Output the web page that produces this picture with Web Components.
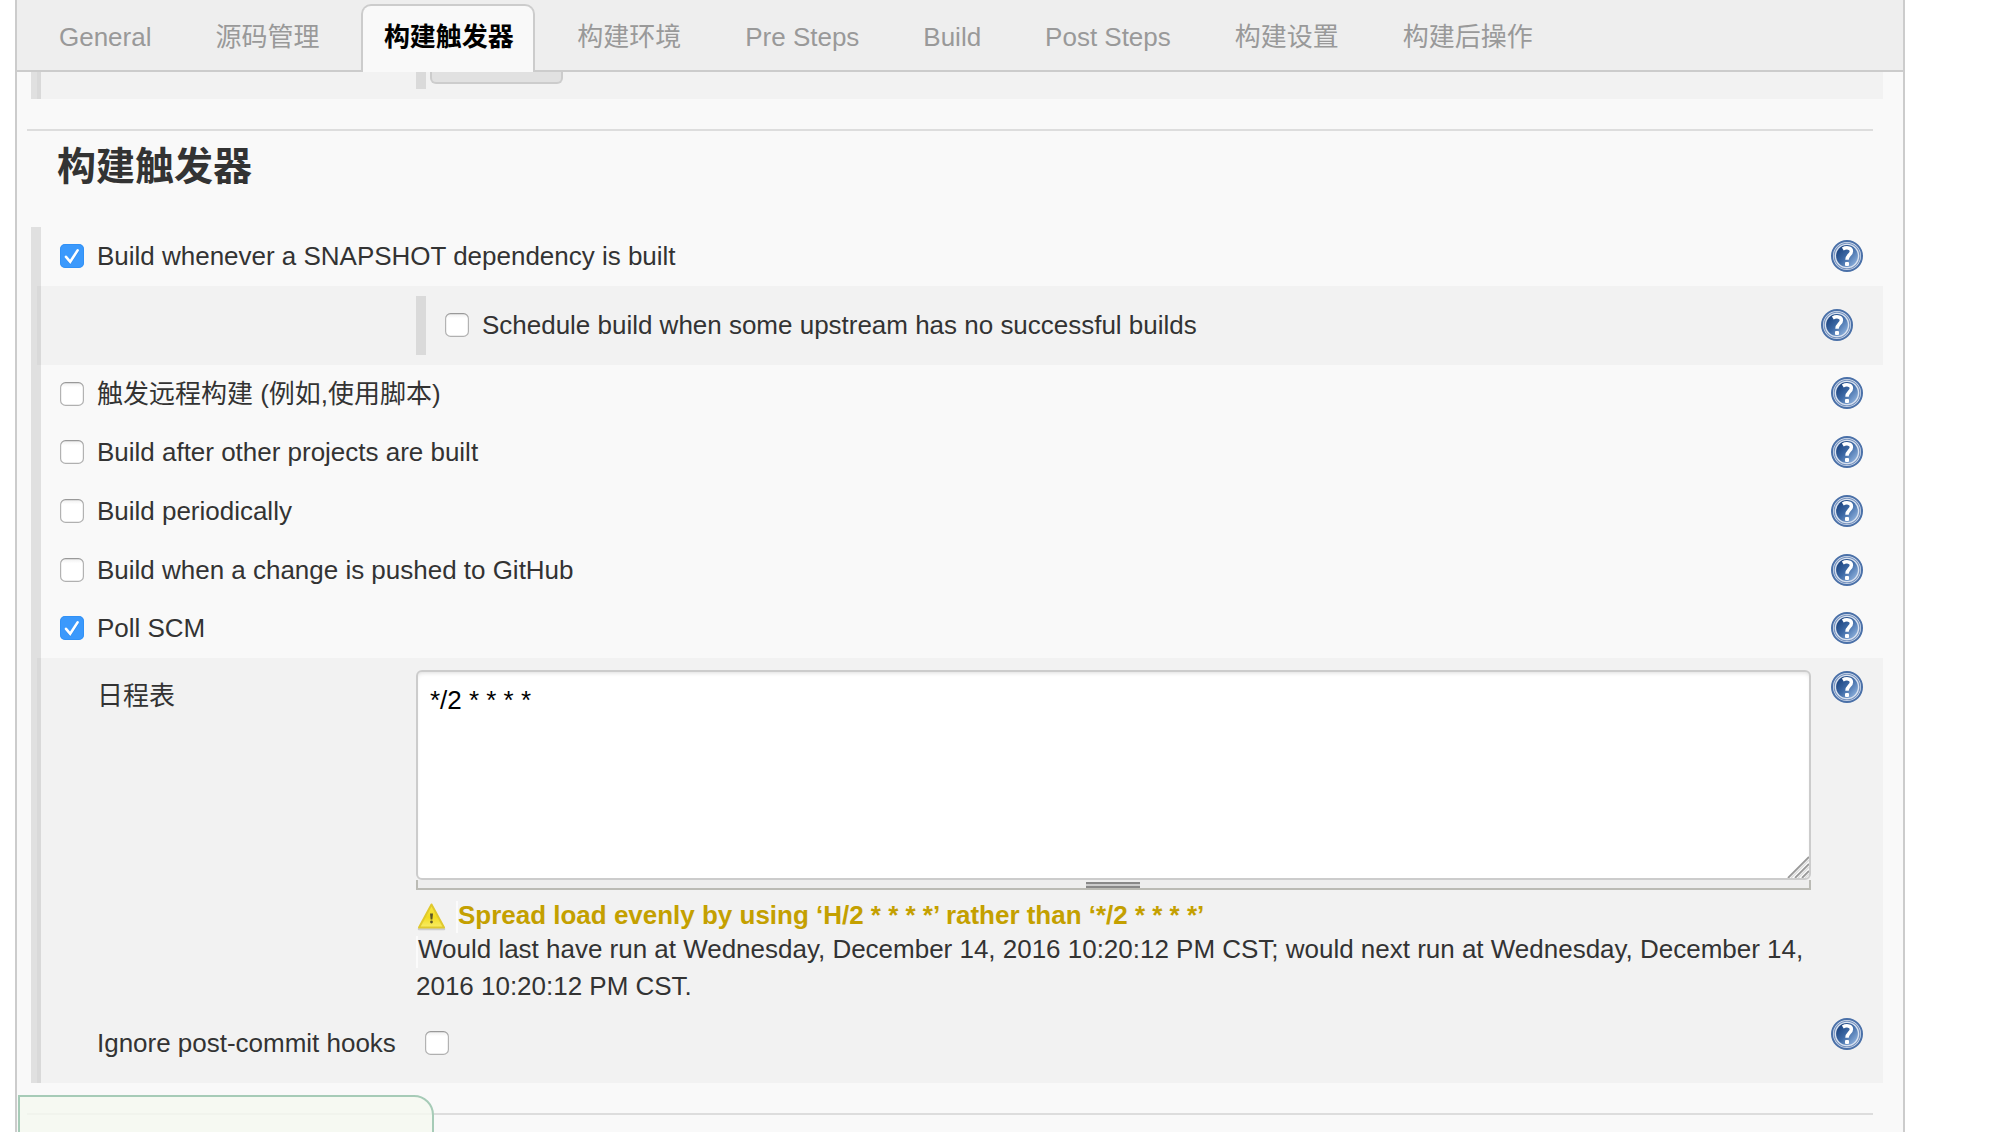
<!DOCTYPE html>
<html lang="zh-CN">
<head>
<meta charset="utf-8">
<title>构建触发器</title>
<style>
html,body{margin:0;height:100%;overflow:hidden;background:#fff}
body{font:26px/36px "Liberation Sans","Noto Sans CJK SC",sans-serif;color:#333;letter-spacing:-.012px}
</style>
</head>
<body>
<config-page></config-page>
<script>
const define = (name, html) => {
  const t = document.createElement('template');
  t.innerHTML = html;
  customElements.define(name, class extends HTMLElement {
    constructor() {
      super();
      this.attachShadow({mode: 'open'}).append(t.content.cloneNode(true));
    }
  });
};

define('config-tab', `<style>
:host{display:flex;align-items:center;height:50px;padding:0 32px;color:#999;white-space:nowrap}
:host([active]){box-sizing:border-box;height:68px;margin:0 10.5px -2px 9.5px;padding:0 19px 4px 21px;border:2px solid #ccc;border-bottom:0;border-radius:10px 10px 0 0;background:#f9f9f9;color:#000;font-weight:bold}
</style><slot></slot>`);

define('tab-bar', `<style>
:host{display:flex;align-items:flex-start;box-sizing:border-box;height:72px;flex:none;padding:4px 0 0 10px;background:#eee;border-bottom:2px solid #ccc}
::slotted(*){margin-top:8px}
::slotted([active]){margin-top:0}
</style><slot></slot>`);

define('check-box', `<style>
:host{display:block;flex:none;width:24px;height:24px}
svg{display:block}
.on{display:none}
:host([checked]) .on{display:block}
:host([checked]) .off{display:none}
</style>
<svg class="off" width="24" height="24" viewBox="0 0 24 24"><defs><linearGradient id="s" x2="0" y2="1"><stop stop-color="#999"/><stop offset=".2" stop-color="#b4b4b4"/><stop offset="1" stop-color="#b0b0b0"/></linearGradient><linearGradient id="f" x2="0" y2="1"><stop stop-color="#eee"/><stop offset=".2" stop-color="#fff"/></linearGradient></defs><rect x=".6" y=".6" width="22.8" height="22.8" rx="5" fill="url(#f)" stroke="url(#s)" stroke-width="1.2"/></svg>
<svg class="on" width="24" height="24" viewBox="0 0 24 24"><rect width="24" height="24" rx="5" fill="#3b99fc"/><rect x=".5" y=".5" width="23" height="23" rx="4.5" fill="none" stroke="#2c8cf2" stroke-opacity=".6"/><path d="M6 13.5L10.2 18.5L18 7" fill="none" stroke="#1c74d0" stroke-opacity=".4" stroke-width="2.6"/><path d="M6 12.8L10.2 17.8L17.6 6.4" fill="none" stroke="#fff" stroke-width="2.6" stroke-linecap="round"/></svg>`);

define('help-icon', `<style>:host{display:block;flex:none;width:32px;height:32px}svg{display:block}</style>
<svg width="32" height="32" viewBox="0 0 32 32"><defs><linearGradient id="g" x1=".1" y1=".2" x2=".9" y2=".9"><stop stop-color="#1e4682"/><stop offset=".45" stop-color="#3e6aa6"/><stop offset="1" stop-color="#8db0dc"/></linearGradient></defs>
<circle cx="16" cy="16" r="15" fill="#dae3f0" stroke="#4a70a8" stroke-width="2"/><circle cx="16" cy="16" r="12.8" fill="none" stroke="#7793bf" stroke-width="1.1"/><circle cx="16" cy="16" r="10.9" fill="url(#g)"/>
<path d="M11.8 9C14.8 7.2 20.4 7.2 20.4 11.2C20.4 14.8 16 14.8 16 19.8" fill="none" stroke="#fff" stroke-width="3.5"/><rect x="14" y="22" width="4" height="4" rx="1" fill="#fff"/></svg>`);

define('option-row', `<style>
:host{display:flex;align-items:center;box-sizing:border-box;height:58px;padding:0 20px 0 19px;margin-left:10px}
.label{flex:1;padding-left:13px;white-space:nowrap}
:host([raised]) help-icon{margin-top:-2px}
</style><slot name="box"></slot><span class="label"><slot></slot></span><help-icon></help-icon>`);

define('nested-block', `<style>
:host{display:block;box-sizing:border-box;margin-left:6px;padding-left:4px;background:rgba(0,0,0,.026)}
</style><slot></slot>`);

define('section-head', `<style>
:host{display:block;margin:0 30px 0 10px;border-top:2px solid #ddd;flex:none}
h2{margin:0;padding:7px 0 0 30px;font-size:39px;line-height:58px;height:57px;font-weight:bold}
</style><h2><slot></slot></h2>`);

define('cron-field', `<style>
:host{display:block;width:1395px}
.area{box-sizing:border-box;height:210px;border:2px solid #ccc;border-radius:6px;background:#fff;box-shadow:inset 0 3px 4px -2px #ddd;padding:10px 12px 11px;color:#000;display:flex;justify-content:space-between}
.corner{align-self:flex-end;margin:0 -12px -11px 0}
.drag{box-sizing:border-box;height:10px;border:2px solid #bbbbb5;border-top:0;background:#eee;display:flex;justify-content:center}
.grip{width:54px;height:6px;margin:2px 1px 0 0;background:linear-gradient(#888 0 2px,#ccc 2px 4px,#888 4px)}
</style><div class="area"><slot></slot><svg class="corner" width="22" height="22" viewBox="0 0 22 22"><g stroke="#999" stroke-width="1.8"><path d="M1 22L22 1M8 22L22 8M15 22L22 15"/></g><g stroke="#ddd" stroke-width="1.5"><path d="M4 22L22 4M11 22L22 11M18 22L22 18"/></g></svg></div><div class="drag"><div class="grip"></div></div>`);

define('cron-message', `<style>
:host{display:block}
.warn{display:flex;height:35px;align-items:flex-start;padding-top:10px;color:#c4a000;font-weight:bold}
.warn svg{margin:1px 10px 0 0;flex:none}
.txt{line-height:28px;height:32px;border-left:2px solid #fbfbfb;white-space:nowrap;margin-top:1px;margin-left:-1px}
.run{margin-top:1px;white-space:nowrap}
.first{display:block;border-left:2px solid #fbfbfb;height:32px;line-height:26px}
.next{display:block;height:36px;line-height:36px}
</style><div class="warn"><svg width="31" height="30" viewBox="0 0 31 30"><defs><linearGradient id="y" x2="0" y2="1"><stop stop-color="#f7e94c"/><stop offset=".55" stop-color="#f2dc20"/><stop offset="1" stop-color="#f8ed68"/></linearGradient></defs><path d="M3 28L28 28" stroke="#aaa" stroke-opacity=".5" stroke-width="2.5" stroke-linecap="round"/><path d="M15.5 3.5L28 26.5H3Z" fill="url(#y)" stroke="#e0c92e" stroke-width="2" stroke-linejoin="round"/><path d="M14 12.5H17L16.4 18.5H14.6Z" fill="#5c572c"/><circle cx="15.5" cy="21" r="1.4" fill="#5c572c"/></svg><span class="txt"><slot name="warning"></slot></span></div>
<div class="run"><span class="first"><slot name="first"></slot></span><span class="next"><slot name="next"></slot></span></div>`);

define('config-page', `<style>
:host{display:flex;flex-direction:column;box-sizing:border-box;width:1890px;height:1132px;margin-left:15px;border:solid #ccc;border-width:0 2px;background:#f9f9f9;overflow:hidden}
.group{margin:0 20px 0 14px;background:linear-gradient(#e0e0e0,#e0e0e0) 0 0/10px 100% no-repeat;flex:none}
.prev{height:27px;margin-bottom:30px}
.prev nested-block{height:27px;padding-left:379px;display:flex;align-items:flex-start}
.stripe{width:10px;height:17px;background:#dadada}
.button{box-sizing:border-box;width:133px;height:12px;margin-left:4px;border:2px solid #ccc;border-top:0;border-radius:0 0 6px 6px;background:#e1e1e1}
.triggers{margin-top:32px}
.h59{height:59px;padding-bottom:1px}.h60{height:60px}
.upstream{height:79px;padding:10px 30px 10px 379px;display:flex}
.upstream option-row{flex:1;height:59px;margin:0;padding:0 0 1px 29px;background:linear-gradient(#dadada,#dadada) 0 0/10px 100% no-repeat}
.poll{height:425px;padding:12px 20px 0 60px}
.line{display:flex;align-items:flex-start}
.name{flex:none;width:319px;white-space:nowrap}
.main{flex:none;width:1395px;height:336px}
.line help-icon{margin-left:20px;margin-top:1px}
.ignore .name{width:328px;padding-top:19px}
.ignore check-box{margin-top:25px}
.ignore help-icon{margin-left:auto;margin-top:12px}
.schedule .name{padding-top:8px}
section-head.last{margin-top:30px}
.toast{position:absolute;left:18px;top:1095px;box-sizing:border-box;width:416px;height:60px;border:2px solid #a6cbb7;border-top-right-radius:20px;background:rgba(245,249,240,.82)}
</style>
<tab-bar><config-tab>General</config-tab><config-tab>源码管理</config-tab><config-tab active>构建触发器</config-tab><config-tab>构建环境</config-tab><config-tab>Pre Steps</config-tab><config-tab>Build</config-tab><config-tab>Post Steps</config-tab><config-tab>构建设置</config-tab><config-tab>构建后操作</config-tab></tab-bar>
<div class="group prev"><nested-block><div class="stripe"></div><div class="button"></div></nested-block></div>
<section-head>构建触发器</section-head>
<div class="group triggers">
<option-row class="h59"><check-box slot="box" checked></check-box>Build whenever a SNAPSHOT dependency is built</option-row>
<nested-block class="upstream"><option-row><check-box slot="box"></check-box>Schedule build when some upstream has no successful builds</option-row></nested-block>
<option-row raised><check-box slot="box"></check-box>触发远程构建 (例如,使用脚本)</option-row>
<option-row><check-box slot="box"></check-box>Build after other projects are built</option-row>
<option-row class="h60"><check-box slot="box"></check-box>Build periodically</option-row>
<option-row><check-box slot="box"></check-box>Build when a change is pushed to GitHub</option-row>
<option-row class="h59"><check-box slot="box" checked></check-box>Poll SCM</option-row>
<nested-block class="poll">
<div class="line schedule"><div class="name">日程表</div><div class="main"><cron-field>*/2 * * * *</cron-field><cron-message><span slot="warning">Spread load evenly by using ‘H/2 * * * *’ rather than ‘*/2 * * * *’</span><span slot="first">Would last have run at Wednesday, December 14, 2016 10:20:12 PM CST; would next run at Wednesday, December 14,</span><span slot="next">2016 10:20:12 PM CST.</span></cron-message></div><help-icon></help-icon></div>
<div class="line ignore"><div class="name">Ignore post-commit hooks</div><check-box></check-box><help-icon></help-icon></div>
</nested-block>
</div>
<section-head class="last"></section-head>
<div class="toast"></div>`);
</script>
</body>
</html>
